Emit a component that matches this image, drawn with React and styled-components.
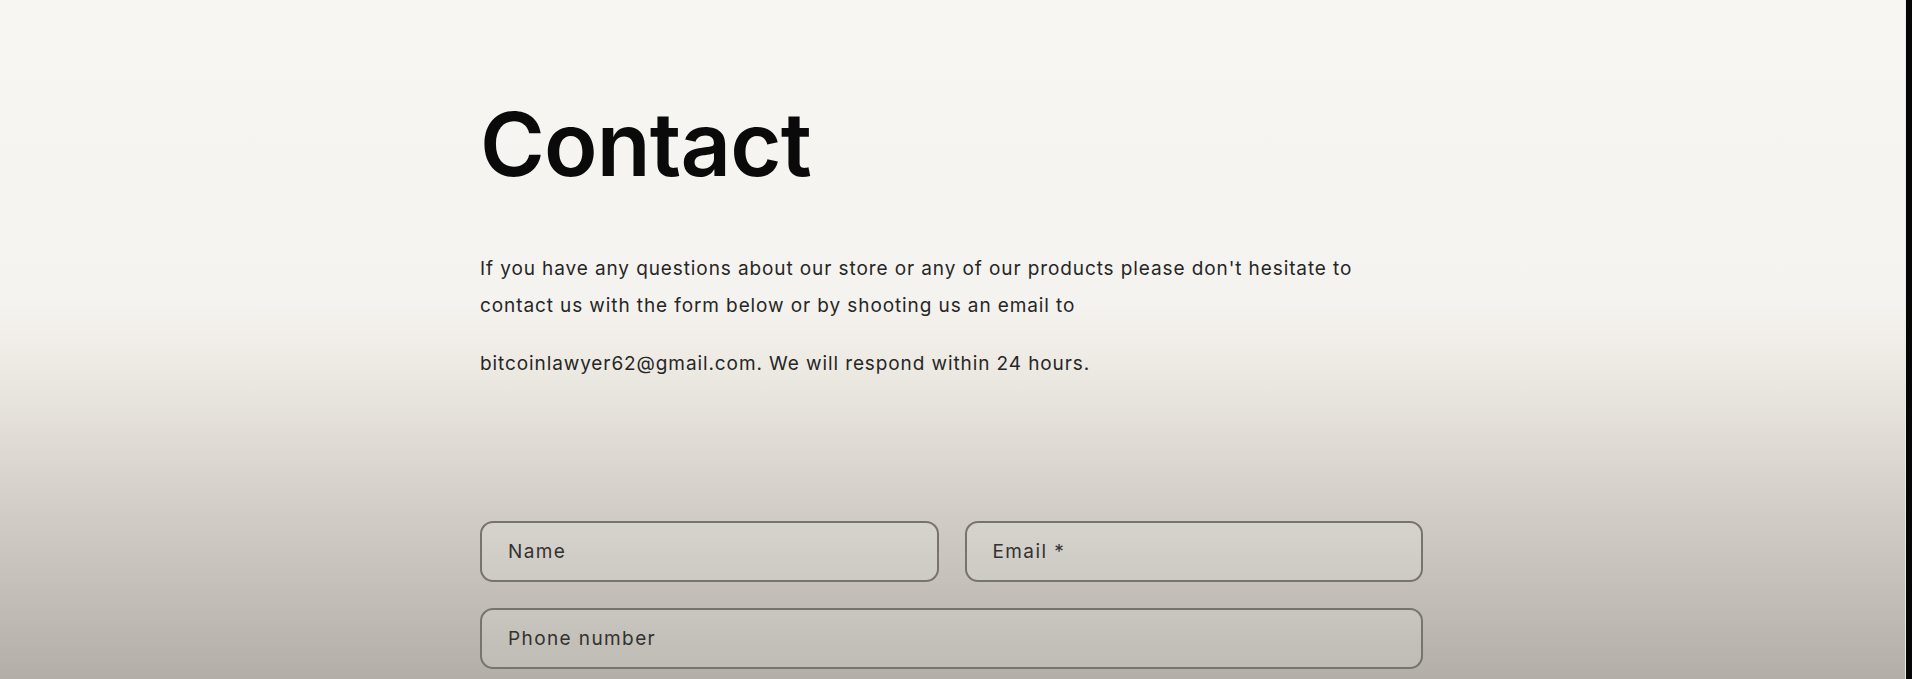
import React from "react";
import styled, { createGlobalStyle } from "styled-components";

const Global = createGlobalStyle`
  html, body { margin: 0; padding: 0; }
  body { font-family: Inter, "Noto Sans", Arial, sans-serif; }
  * { box-sizing: border-box; }
`;

const Shell = styled.div`
  display: flex;
  height: 100vh;
  min-height: 679px;
  overflow: hidden;
`;

const Page = styled.main`
  flex: 1;
  background: linear-gradient(
    to bottom,
    #f7f6f3 0px,
    #f5f3ef 300px,
    #eeebe5 360px,
    #e2ded7 430px,
    #d3cfc8 505px,
    #c4c0b9 588px,
    #b3afa8 679px
  );
  border-right: 1px solid #ecebe8;
`;

const Edge = styled.div`
  width: 6px;
  background: #060606;
`;

const Container = styled.section`
  width: 943px;
  margin-left: 480px;
  padding-top: 100px;
`;

const Title = styled.h1`
  margin: 0;
  font-family: Inter, "Noto Sans", sans-serif;
  font-weight: 600;
  font-size: 88px;
  line-height: 88px;
  letter-spacing: -0.8px;
  color: #0a0a0a;
`;

const Text = styled.p`
  margin: ${(p) => p.$mt}px 0 0;
  font-family: Inter, "Noto Sans", sans-serif;
  font-size: 19px;
  line-height: 37px;
  letter-spacing: 0.9px;
  color: #262626;
  white-space: nowrap;
`;

const Form = styled.form`
  margin-top: 139px;
  display: grid;
  grid-template-columns: 1fr 1fr;
  gap: 26px;
`;

const Field = styled.label`
  grid-column: ${(p) => (p.$full ? "1 / -1" : "auto")};
  height: 61px;
  display: flex;
  align-items: center;
  padding-left: 26px;
  border: 2px solid #77746f;
  border-radius: 13px;
  background: rgba(255, 255, 255, 0.14);
  font-family: Inter, "Noto Sans", sans-serif;
  font-size: 19px;
  letter-spacing: 1.4px;
  color: #333230;
`;

export default function App() {
  return (
    <>
      <Global />
      <Shell>
        <Page>
          <Container>
            <Title>Contact</Title>
            <Text $mt={62}>
              If you have any questions about our store or any of our products please don't hesitate to
              <br />
              contact us with the form below or by shooting us an email to
            </Text>
            <Text $mt={21}>bitcoinlawyer62@gmail.com. We will respond within 24 hours.</Text>
            <Form onSubmit={(e) => e.preventDefault()}>
              <Field>Name</Field>
              <Field>Email *</Field>
              <Field $full>Phone number</Field>
            </Form>
          </Container>
        </Page>
        <Edge />
      </Shell>
    </>
  );
}
